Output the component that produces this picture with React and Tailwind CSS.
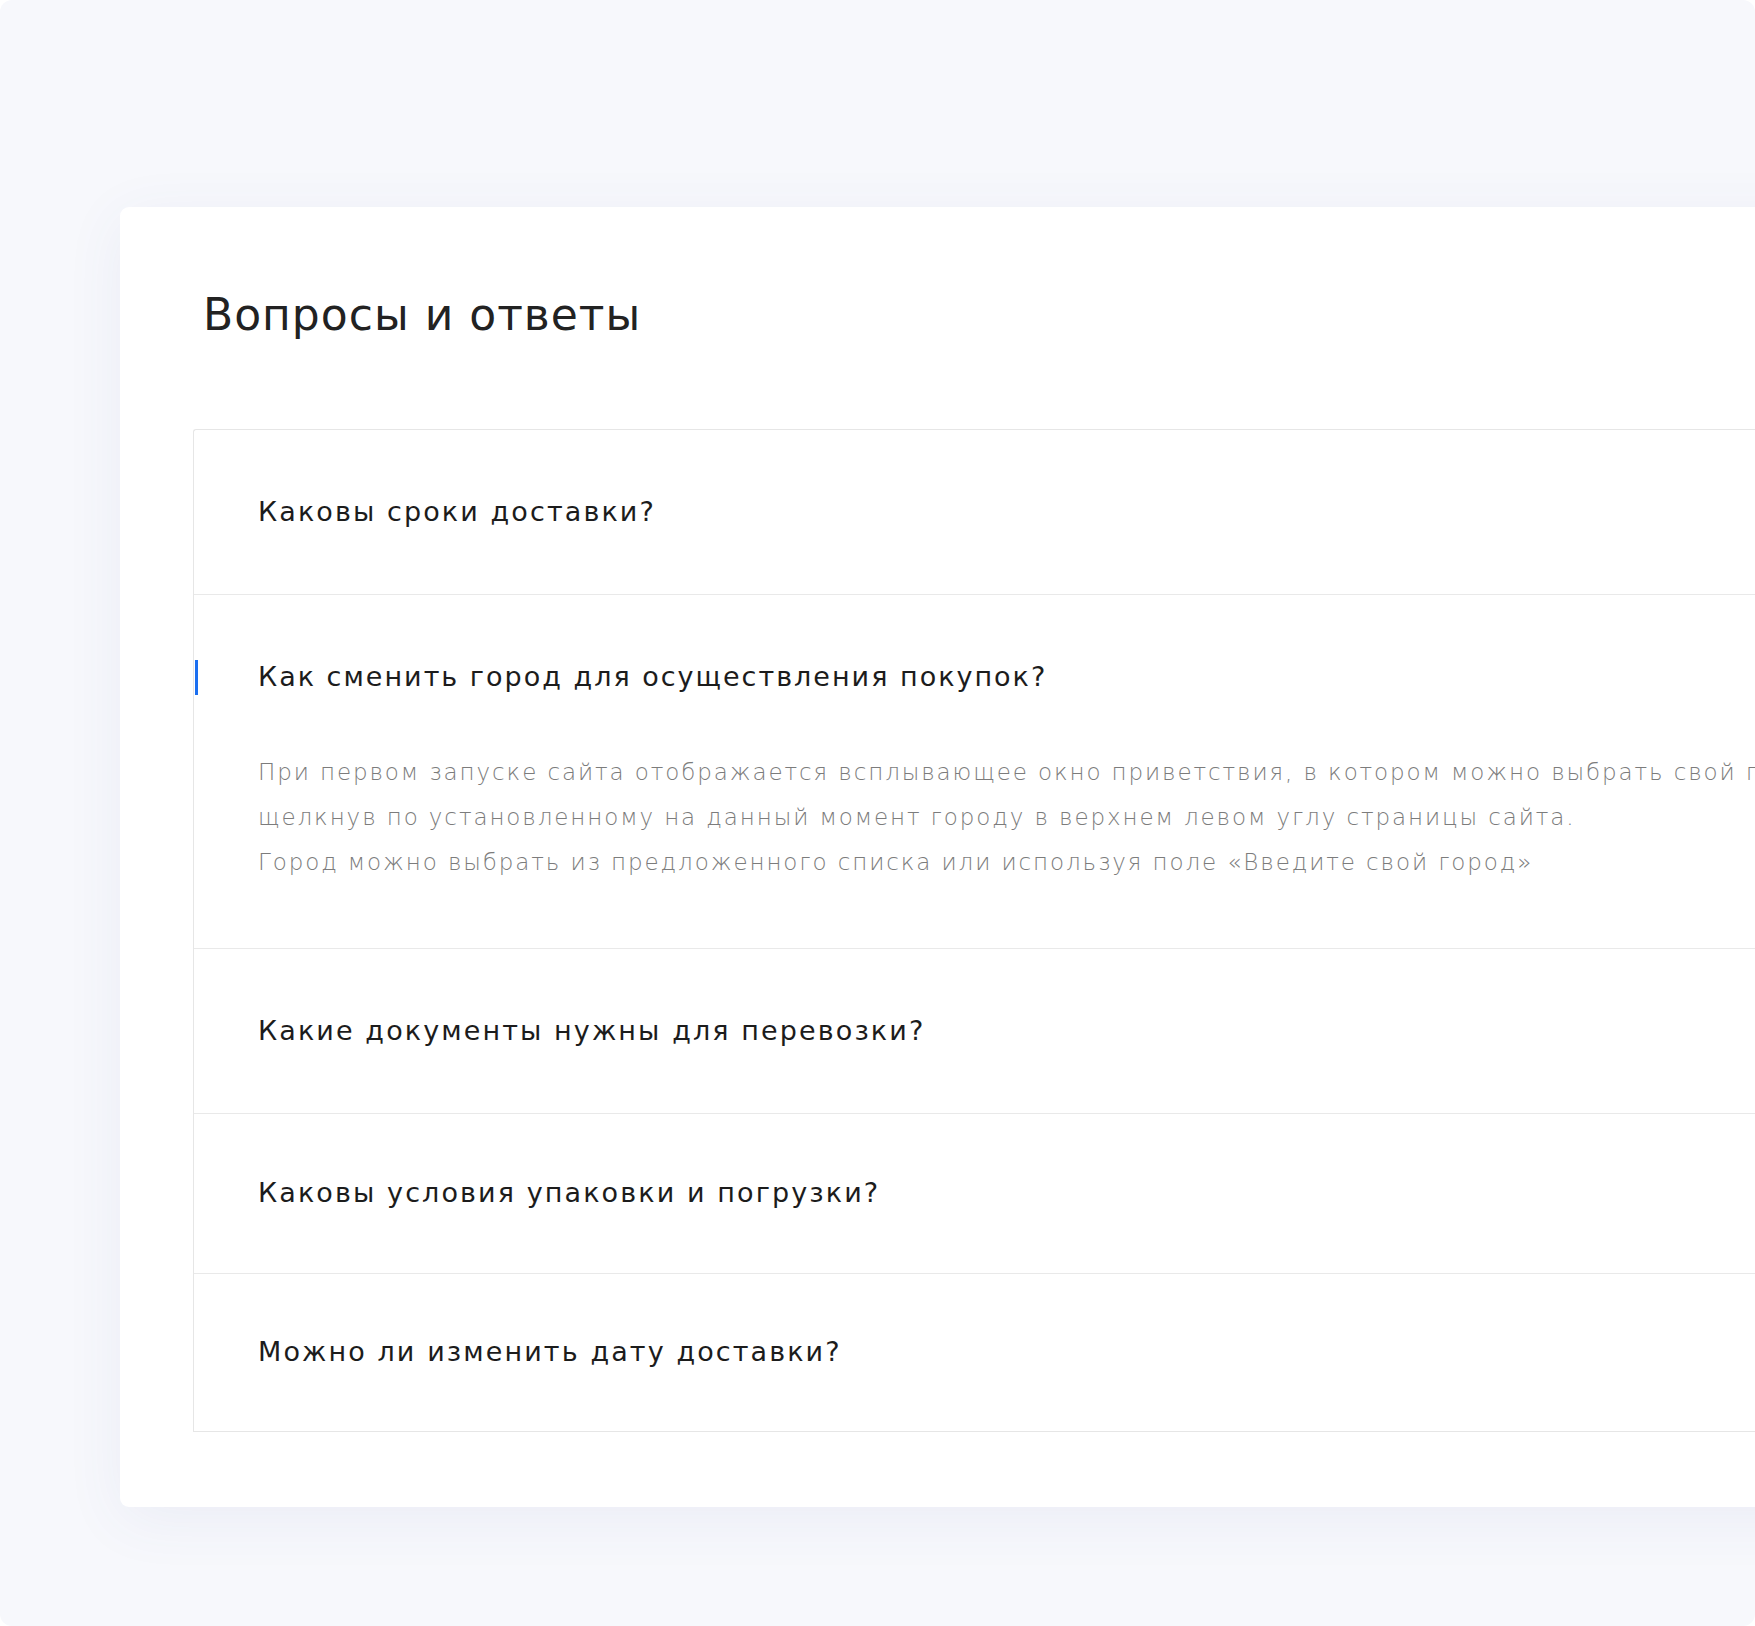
import React from 'react';

const faqs = [
  { q: 'Каковы сроки доставки?', h: 'h-[165px]' },
  {
    q: 'Как сменить город для осуществления покупок?',
    open: true,
    answer: [
      'При первом запуске сайта отображается всплывающее окно приветствия, в котором можно выбрать свой город или изменить его позже,',
      'щелкнув по установленному на данный момент городу в верхнем левом углу страницы сайта.',
      'Город можно выбрать из предложенного списка или используя поле «Введите свой город»',
    ],
  },
  { q: 'Какие документы нужны для перевозки?', h: 'h-[165px]' },
  { q: 'Каковы условия упаковки и погрузки?', h: 'h-[160px]' },
  { q: 'Можно ли изменить дату доставки?', h: 'h-[157px]', last: true },
];

function FaqRow({ item }) {
  if (item.open) {
    return (
      <div className="border-b border-[#e9e9e9] pb-[63px]">
        <div className="flex h-[165px] items-center">
          <span className="ml-[1px] h-[35px] w-[3px] bg-[#1b6ff0]" />
          <span className="ml-[60px] text-[27px] tracking-[2px] text-[#1c1c1c]">{item.q}</span>
        </div>
        <div className="-mt-[10px] pl-[64px] text-[23px] font-light leading-[45px] tracking-[1.9px] text-[#7c7c7c] whitespace-nowrap">
          {item.answer.map((line, i) => (
            <p key={i}>{line}</p>
          ))}
        </div>
      </div>
    );
  }

  return (
    <div className={`flex items-center pl-[64px] ${item.h} ${item.last ? '' : 'border-b border-[#e9e9e9]'}`}>
      <span className="text-[27px] tracking-[2.1px] text-[#1c1c1c]">{item.q}</span>
    </div>
  );
}

export default function App() {
  return (
    <div className="h-[1626px] w-[1755px] overflow-hidden bg-white" style={{ fontFamily: '"DejaVu Sans", Inter, sans-serif' }}>
      <div className="h-full w-full overflow-hidden rounded-[12px] bg-[#f7f8fc] pl-[120px] pt-[207px]">
        <div className="h-[1300px] w-[1800px] rounded-[9px] bg-white pl-[73px] pt-[78px] shadow-[0_12px_60px_rgba(70,80,160,0.07)]">
          <h2 className="ml-[10px] text-[44px] leading-[60px] tracking-[1px] text-[#222222]">Вопросы и ответы</h2>

          {/* accordion */}
          <div className="mt-[84px] rounded-tl-[3px] border border-r-0 border-[#e6e6e6]">
            {faqs.map((item, i) => (
              <FaqRow key={i} item={item} />
            ))}
          </div>
        </div>
      </div>
    </div>
  );
}
